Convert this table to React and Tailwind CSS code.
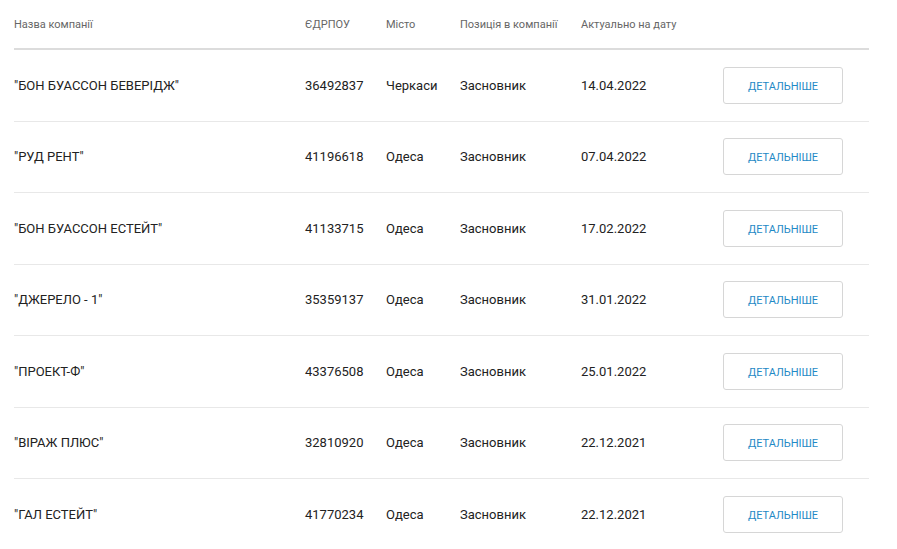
const rows = [
  { name: '"БОН БУАССОН БЕВЕРІДЖ"', code: "36492837", city: "Черкаси", role: "Засновник", date: "14.04.2022" },
  { name: '"РУД РЕНТ"', code: "41196618", city: "Одеса", role: "Засновник", date: "07.04.2022" },
  { name: '"БОН БУАССОН ЕСТЕЙТ"', code: "41133715", city: "Одеса", role: "Засновник", date: "17.02.2022" },
  { name: '"ДЖЕРЕЛО - 1"', code: "35359137", city: "Одеса", role: "Засновник", date: "31.01.2022" },
  { name: '"ПРОЕКТ-Ф"', code: "43376508", city: "Одеса", role: "Засновник", date: "25.01.2022" },
  { name: '"ВІРАЖ ПЛЮС"', code: "32810920", city: "Одеса", role: "Засновник", date: "22.12.2021" },
  { name: '"ГАЛ ЕСТЕЙТ"', code: "41770234", city: "Одеса", role: "Засновник", date: "22.12.2021" },
]

const cols = "grid grid-cols-[291px_81px_74px_121px_142px_146px] items-center"

export default function App() {
  return (
    <div className="min-h-screen bg-white font-['Roboto',sans-serif] pl-[14px]">
      <div className="w-[855px]">
        <div className={`${cols} h-[50px] pt-[3px] border-b-2 border-[#dcdcdc] text-[11px] text-[#666]`}>
          <div>Назва компанії</div>
          <div>ЄДРПОУ</div>
          <div>Місто</div>
          <div>Позиція в компанії</div>
          <div>Актуально на дату</div>
          <div />
        </div>
        {rows.map((r, i) => (
          <div
            key={i}
            className={`${cols} h-[71.5px] border-b border-[#e8e8e8] text-[13px] text-[#222]`}
          >
            <div>{r.name}</div>
            <div>{r.code}</div>
            <div>{r.city}</div>
            <div>{r.role}</div>
            <div>{r.date}</div>
            <div>
              <button className="w-[120px] h-[37px] pt-[3px] border border-[#d6d6d6] rounded-[3px] bg-white text-[11px] text-[#1f8ac6] uppercase">
                Детальніше
              </button>
            </div>
          </div>
        ))}
      </div>
    </div>
  )
}
